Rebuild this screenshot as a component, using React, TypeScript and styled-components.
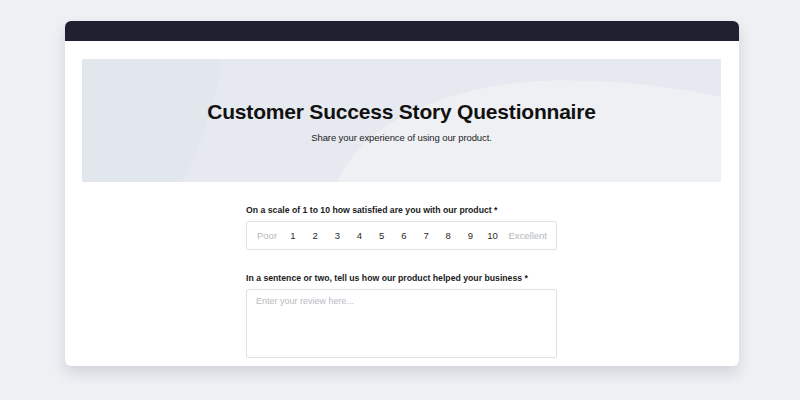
import React from "react";
import styled, { createGlobalStyle } from "styled-components";

const GlobalStyle = createGlobalStyle`
  html, body {
    margin: 0;
    padding: 0;
    background: #eef0f4;
    font-family: "Liberation Sans", Arial, sans-serif;
  }
`;

const Page = styled.div`
  width: 800px;
  height: 400px;
  box-sizing: border-box;
  padding: 21px 61px 0 65px;
  overflow: hidden;
`;

const Window = styled.div`
  height: 345px;
  background: #ffffff;
  border-radius: 6px;
  overflow: hidden;
  box-shadow: 0 7px 14px rgba(40, 45, 60, 0.14);
  display: flex;
  flex-direction: column;
`;

const TopBar = styled.div`
  height: 20px;
  flex-shrink: 0;
  background: #1f2130;
`;

const Body = styled.div`
  padding: 18px 18px 0 17px;
  display: flex;
  flex-direction: column;
`;

// soft background shapes: darker arc on the left, lighter swell on the right
const Hero = styled.div`
  height: 123px;
  background:
    radial-gradient(circle 366px at -222px -50px, #e2e6ed 99.6%, rgba(226, 230, 237, 0) 100%),
    radial-gradient(ellipse 230px 129px at 480px 150px, #eef0f4 99.4%, rgba(238, 240, 244, 0) 100%) 0 0 / 480px 123px no-repeat,
    radial-gradient(ellipse 420px 220px at 0 241px, #eef0f4 99.6%, rgba(238, 240, 244, 0) 100%) 480px 0 / 200px 123px no-repeat,
    #e6e9f0;
  display: flex;
  flex-direction: column;
  align-items: center;
  justify-content: center;
`;

const Title = styled.h1`
  margin: 2px 0 0 0;
  font-size: 21px;
  font-weight: 700;
  color: #111111;
  letter-spacing: -0.2px;
`;

const Subtitle = styled.p`
  margin: 8px 0 0 0;
  font-size: 9.5px;
  color: #222222;
  letter-spacing: -0.1px;
`;

const Form = styled.div`
  width: 311px;
  align-self: center;
  padding-top: 23px;
  display: flex;
  flex-direction: column;
`;

const Label = styled.label`
  font-size: 8.7px;
  font-weight: 700;
  color: #1a1a1a;
  margin-bottom: 6px;
`;

const Scale = styled.div`
  height: 29px;
  box-sizing: border-box;
  border: 1px solid #dfe1e5;
  border-radius: 2px;
  display: flex;
  align-items: center;
  justify-content: space-between;
  padding: 0 9px 0 10px;
  margin-bottom: 23px;
`;

const ScaleEnd = styled.span`
  font-size: 9.5px;
  color: #b4b7bd;
`;

const Numbers = styled.div`
  display: flex;
`;

const Number = styled.span`
  width: 22.2px;
  text-align: center;
  font-size: 9.5px;
  color: #2a2a2a;
`;

const Review = styled.textarea`
  height: 69px;
  box-sizing: border-box;
  border: 1px solid #dfe1e5;
  border-radius: 2px;
  resize: none;
  padding: 6px 9px;
  font-family: "Liberation Sans", Arial, sans-serif;
  font-size: 9px;
  color: #222;
  outline: none;

  &::placeholder {
    color: #b8bbc1;
  }
`;

const numbers = [1, 2, 3, 4, 5, 6, 7, 8, 9, 10];

export default function App() {
  return (
    <>
      <GlobalStyle />
      <Page>
        <Window>
          <TopBar />
          <Body>
            <Hero>
              <Title>Customer Success Story Questionnaire</Title>
              <Subtitle>Share your experience of using our product.</Subtitle>
            </Hero>
            <Form>
              <Label>On a scale of 1 to 10 how satisfied are you with our product *</Label>
              <Scale>
                <ScaleEnd>Poor</ScaleEnd>
                <Numbers>
                  {numbers.map((n) => (
                    <Number key={n}>{n}</Number>
                  ))}
                </Numbers>
                <ScaleEnd>Excellent</ScaleEnd>
              </Scale>
              <Label>In a sentence or two, tell us how our product helped your business *</Label>
              <Review placeholder="Enter your review here..." />
            </Form>
          </Body>
        </Window>
      </Page>
    </>
  );
}
